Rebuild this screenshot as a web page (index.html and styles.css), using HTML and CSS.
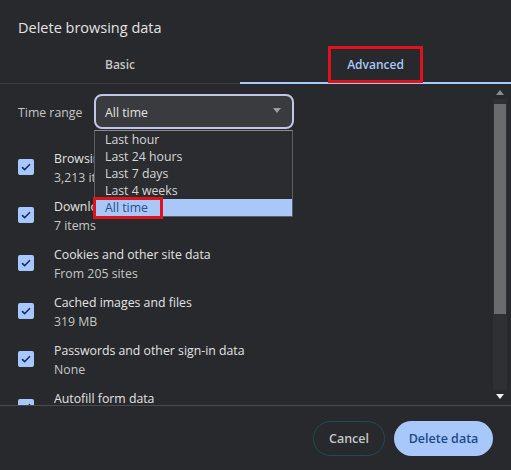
FILE: index.html
```html
<!DOCTYPE html>
<html>
<head>
<meta charset="utf-8">
<link rel="stylesheet" href="styles.css">
</head>
<body>
<div class="dialog">
  <h1 class="title">Delete browsing data</h1>
  <div class="tabs">
    <div class="tab">Basic</div>
    <div class="tab active"><span class="tab-label">Advanced</span></div>
  </div>
  <div class="body">
    <div class="content">
      <div class="range-row">
        <span class="range-label">Time range</span>
        <div class="select-wrap">
          <div class="select">
            <span>All time</span>
            <svg class="caret" width="8" height="5" viewBox="0 0 8 5"><path d="M0 0h8L4 5z" fill="#9aa0a6"/></svg>
          </div>
          <ul class="menu">
            <li>Last hour</li>
            <li>Last 24 hours</li>
            <li>Last 7 days</li>
            <li>Last 4 weeks</li>
            <li class="selected"><span class="mark">All time</span></li>
          </ul>
        </div>
      </div>
      <div class="item">
        <span class="check"><svg width="10" height="8" viewBox="0 0 10 8"><path d="M1 4.2l2.6 2.5L9 1.2" fill="none" stroke="#0b2f6b" stroke-width="1.6"/></svg></span>
        <div class="text"><div class="name">Browsing history</div><div class="sub">3,213 items</div></div>
      </div>
      <div class="item">
        <span class="check"><svg width="10" height="8" viewBox="0 0 10 8"><path d="M1 4.2l2.6 2.5L9 1.2" fill="none" stroke="#0b2f6b" stroke-width="1.6"/></svg></span>
        <div class="text"><div class="name">Download history</div><div class="sub">7 items</div></div>
      </div>
      <div class="item">
        <span class="check"><svg width="10" height="8" viewBox="0 0 10 8"><path d="M1 4.2l2.6 2.5L9 1.2" fill="none" stroke="#0b2f6b" stroke-width="1.6"/></svg></span>
        <div class="text"><div class="name">Cookies and other site data</div><div class="sub">From 205 sites</div></div>
      </div>
      <div class="item">
        <span class="check"><svg width="10" height="8" viewBox="0 0 10 8"><path d="M1 4.2l2.6 2.5L9 1.2" fill="none" stroke="#0b2f6b" stroke-width="1.6"/></svg></span>
        <div class="text"><div class="name">Cached images and files</div><div class="sub">319 MB</div></div>
      </div>
      <div class="item">
        <span class="check"><svg width="10" height="8" viewBox="0 0 10 8"><path d="M1 4.2l2.6 2.5L9 1.2" fill="none" stroke="#0b2f6b" stroke-width="1.6"/></svg></span>
        <div class="text"><div class="name">Passwords and other sign-in data</div><div class="sub">None</div></div>
      </div>
      <div class="item">
        <span class="check"><svg width="10" height="8" viewBox="0 0 10 8"><path d="M1 4.2l2.6 2.5L9 1.2" fill="none" stroke="#0b2f6b" stroke-width="1.6"/></svg></span>
        <div class="text"><div class="name">Autofill form data</div><div class="sub">None</div></div>
      </div>
    </div>
    <div class="scrollbar">
      <svg class="arrow" width="8" height="5" viewBox="0 0 8 5"><path d="M0 5h8L4 0z" fill="#8a8b8d"/></svg>
      <div class="track"><div class="thumb"></div></div>
      <svg class="arrow" width="8" height="5" viewBox="0 0 8 5"><path d="M0 0h8L4 5z" fill="#f1f1f1"/></svg>
    </div>
  </div>
  <div class="footer">
    <button class="btn cancel">Cancel</button>
    <button class="btn primary">Delete data</button>
  </div>
</div>
</body>
</html>
```
FILE: styles.css
```css
* { box-sizing: border-box; }
html, body { margin: 0; padding: 0; }
body {
  width: 511px;
  height: 470px;
  overflow: hidden;
  background: #28292c;
  font-family: "Open Sans", "Noto Sans", sans-serif;
  color: #e3e3e3;
}
.dialog {
  display: flex;
  flex-direction: column;
  height: 470px;
}
.title {
  margin: 0;
  padding: 17px 18px 0;
  height: 44px;
  font-size: 14.5px;
  font-weight: 400;
  line-height: 22px;
  color: #e3e3e3;
}
.tabs {
  display: grid;
  grid-template-columns: 240px 1fr;
  height: 40px;
  border-bottom: 1px solid #3c3d40;
}
.tab {
  display: flex;
  align-items: center;
  justify-content: center;
  font-size: 12px;
  font-weight: 600;
  color: #c4c7c5;
  padding-top: 1px;
}
.tab.active {
  color: #a8c7fa;
  border-bottom: 2px solid #a8c7fa;
  margin-bottom: -1px;
  padding-top: 0;
  align-items: flex-end;
}
.tab-label {
  border: 3px solid #e0121c;
  padding: 7px 16px 6px;
  margin-bottom: -1px;
  line-height: 18px;
}
.body {
  display: flex;
  height: 322px;
  border-bottom: 1px solid #4a4b4e;
}
.content {
  flex: 1;
  overflow: hidden;
  padding: 10px 0 0 18px;
}
.range-row {
  display: flex;
  align-items: center;
  gap: 12px;
  height: 35px;
  margin-bottom: 19px;
}
.range-label {
  font-size: 12.3px;
  color: #c4c7c5;
  width: 64px;
  flex: none;
  white-space: nowrap;
  padding-top: 2px;
}
.select-wrap {
  position: relative;
}
.select {
  width: 200px;
  height: 35px;
  border: 2px solid #c2c6e6;
  border-radius: 8px;
  background: #3a3b3e;
  display: flex;
  align-items: center;
  justify-content: space-between;
  padding: 2px 10px 0 9px;
  font-size: 12.3px;
  color: #e3e3e3;
}
.caret { margin-right: 1px; margin-bottom: 4px; }
.menu {
  position: absolute;
  left: 0;
  top: 36px;
  width: 199px;
  margin: 0;
  padding: 0;
  list-style: none;
  background: #2b2c2f;
  border: 1px solid #5c5d60;
  border-top-color: #8a8b8e;
  z-index: 5;
}
.menu li {
  height: 17px;
  line-height: 17px;
  padding-left: 10px;
  font-size: 12.3px;
  color: #d6d7d9;
}
.menu li.selected {
  background: #a9c8f8;
  color: #2a4e8a;
  position: relative;
}
.mark {
  position: relative;
}
.mark::after {
  content: "";
  position: absolute;
  left: -12px;
  right: -15px;
  top: -2px;
  bottom: -3px;
  border: 3px solid #e0121c;
}
.item {
  display: flex;
  align-items: center;
  gap: 20px;
  height: 38px;
  margin-bottom: 10px;
}
.check {
  width: 16px;
  height: 16px;
  border-radius: 2px;
  background: #a8c7fa;
  display: flex;
  align-items: center;
  justify-content: center;
  flex: none;
}
.text { line-height: 19px; font-size: 12.3px; padding-top: 1px; }
.name { color: #e3e3e3; }
.sub { color: #c4c7c5; }
.scrollbar {
  width: 18px;
  display: flex;
  flex-direction: column;
  align-items: center;
  padding: 4px 4px 4px 0;
}
.scrollbar .arrow { flex: none; margin: 2px 0; }
.track {
  flex: 1;
  width: 14px;
  background: #2f3033;
  padding: 5px 1px 0;
  margin: 2px 0;
}
.thumb {
  height: 210px;
  background: #6a6b6d;
}
.footer {
  display: flex;
  justify-content: flex-end;
  align-items: center;
  gap: 9px;
  padding: 0 18px 0 0;
  flex: 1;
}
.btn {
  height: 35px;
  border-radius: 18px;
  font-family: inherit;
  font-size: 12.5px;
  font-weight: 600;
  padding: 0;
}
.cancel {
  width: 72px;
  border: 1px solid #1f4c57;
  background: transparent;
  color: #c4c7c5;
}
.primary {
  width: 99px;
  border: none;
  background: #a8c7fa;
  color: #1b4a88;
}
```
